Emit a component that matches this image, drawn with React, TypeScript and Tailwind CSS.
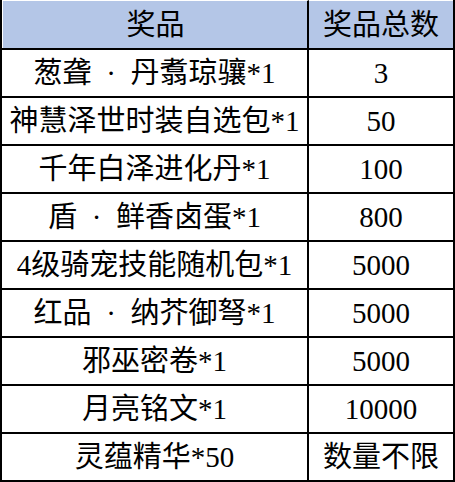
import type { ReactNode } from 'react'

const Dot = () => <span className="inline-block w-[39px] text-center">·</span>

const rows: [ReactNode, string][] = [
  [<>葱聋<Dot />丹翥琼骧*1</>, '3'],
  ['神慧泽世时装自选包*1', '50'],
  ['千年白泽进化丹*1', '100'],
  [<>盾<Dot />鲜香卤蛋*1</>, '800'],
  ['4级骑宠技能随机包*1', '5000'],
  [<>红品<Dot />纳芥御弩*1</>, '5000'],
  ['邪巫密卷*1', '5000'],
  ['月亮铭文*1', '10000'],
  ['灵蕴精华*50', '数量不限'],
]

export default function App() {
  return (
    <div
      className="w-[455px] h-[482px] bg-white text-black text-[29px] leading-none"
      style={{ fontFamily: '"Liberation Serif", "Noto Sans CJK SC", serif' }}
    >
      <div className="w-[455px] border-x-2 border-b-2 border-black">
        {/* header */}
        <div className="grid grid-cols-[307px_1fr] h-[50px] border-b-2 border-black">
          <div className="flex items-center justify-center pt-px pl-px bg-[#b4c6e7] border-t border-l border-white border-r-2 border-r-black">
            奖品
          </div>
          <div className="flex items-center justify-center pt-px bg-[#b4c6e7] border-t border-white">
            奖品总数
          </div>
        </div>
        {rows.map(([name, count], i) => (
          <div
            key={i}
            className={
              i < rows.length - 1
                ? 'grid grid-cols-[307px_1fr] h-[48px] border-b-2 border-black'
                : 'grid grid-cols-[307px_1fr] h-[46px]'
            }
          >
            <div className="flex items-center justify-center border-r-2 border-black whitespace-nowrap">
              <span>{name}</span>
            </div>
            <div className="flex items-center justify-center whitespace-nowrap">{count}</div>
          </div>
        ))}
      </div>
    </div>
  )
}
